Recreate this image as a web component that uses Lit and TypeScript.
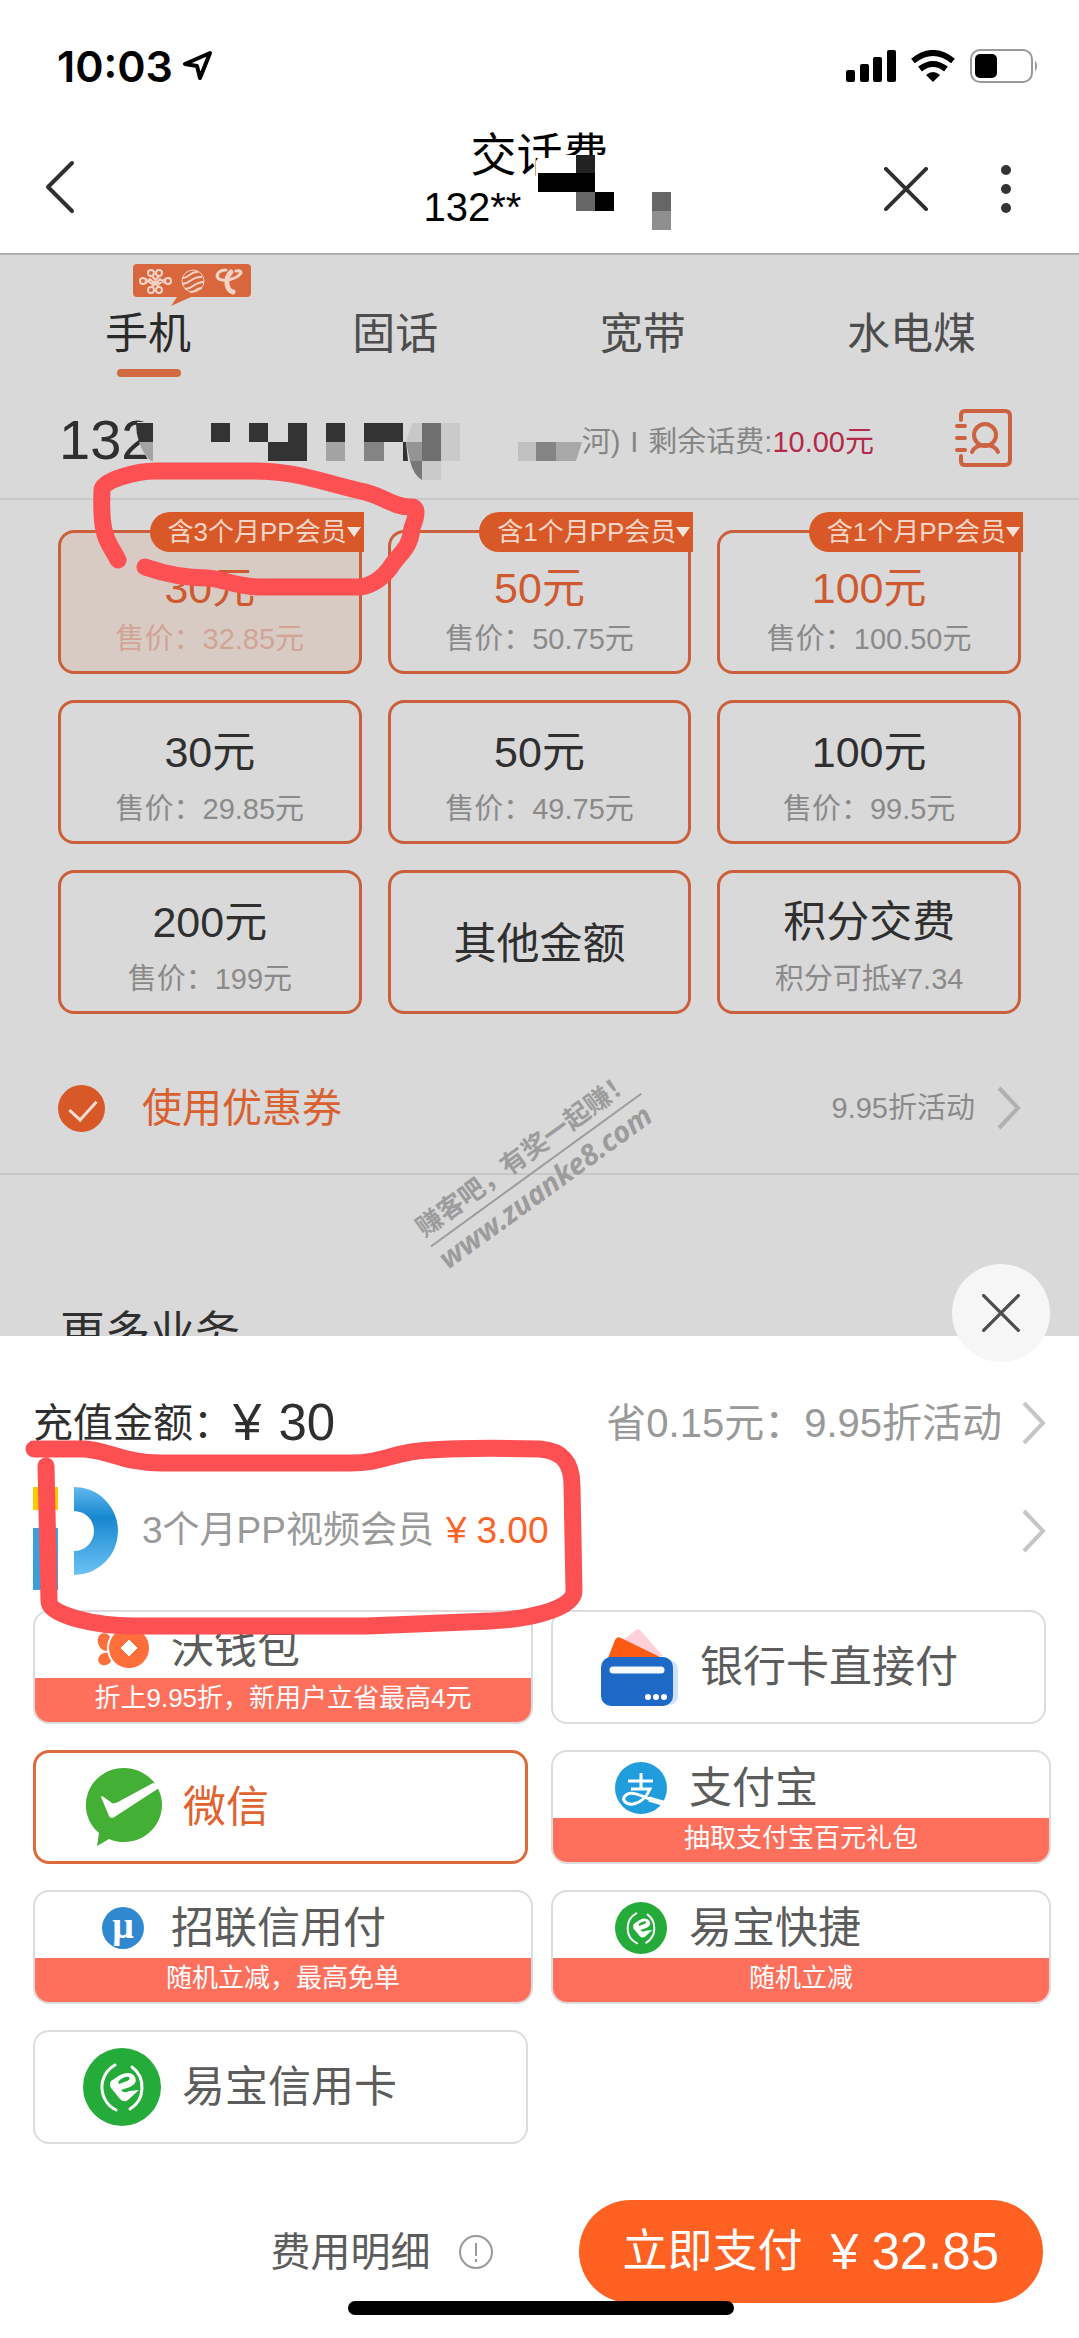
import { LitElement, html, css, svg, nothing } from "lit";
import { customElement, state } from "lit/decorators.js";
import { classMap } from "lit/directives/class-map.js";

type Plan = { amount: string; note?: string; bundle?: string };
type Method = { name: string; icon: string; promo?: string };

const TABS = ["手机", "固话", "宽带", "水电煤"];

const PLANS: Plan[] = [
  { amount: "30元", note: "售价：32.85元", bundle: "含3个月PP会员" },
  { amount: "50元", note: "售价：50.75元", bundle: "含1个月PP会员" },
  { amount: "100元", note: "售价：100.50元", bundle: "含1个月PP会员" },
  { amount: "30元", note: "售价：29.85元" },
  { amount: "50元", note: "售价：49.75元" },
  { amount: "100元", note: "售价：99.5元" },
  { amount: "200元", note: "售价：199元" },
  { amount: "其他金额" },
  { amount: "积分交费", note: "积分可抵¥7.34" },
];

const METHODS: Method[] = [
  { name: "沃钱包", icon: "wo", promo: "折上9.95折，新用户立省最高4元" },
  { name: "银行卡直接付", icon: "bank" },
  { name: "微信", icon: "wechat" },
  { name: "支付宝", icon: "alipay", promo: "抽取支付宝百元礼包" },
  { name: "招联信用付", icon: "mu", promo: "随机立减，最高免单" },
  { name: "易宝快捷", icon: "yee", promo: "随机立减" },
  { name: "易宝信用卡", icon: "yee" },
];

const ICONS: Record<string, unknown> = {
  wo: svg`
    <ellipse cx="8" cy="20" rx="7" ry="9" transform="rotate(-20 8 20)" fill="#ff6f3c"/>
    <ellipse cx="8" cy="37" rx="7" ry="6" transform="rotate(-30 8 37)" fill="#ff6f3c"/>
    <circle cx="32" cy="26" r="22" fill="#fff"/>
    <circle cx="32" cy="26" r="20" fill="#ff6f3c"/>
    <path d="M32 18 40 26 32 34 24 26Z" fill="#fff" stroke="#fff" stroke-width="1" stroke-linejoin="round"/>`,
  bank: svg`
    <path d="M22 12 35 2Q37 0 39 2L62 28H30Z" fill="#ffd0da"/>
    <path d="M7 30 14 12Q16 8 20 10L61 30Z" fill="#ff5a14"/>
    <rect x="8" y="32" width="69" height="45" rx="9" fill="#cfe2ff"/>
    <rect x="0" y="29" width="72" height="49" rx="10" fill="#1f69c6"/>
    <path d="M12 42H60" stroke="#f4f8ff" stroke-width="7" stroke-linecap="round"/>
    <circle cx="47" cy="69" r="3" fill="#fff"/><circle cx="55" cy="69" r="3" fill="#fff"/><circle cx="63" cy="69" r="3" fill="#fff"/>`,
  wechat: svg`
    <path d="M39 0A38 37 0 1 1 25 71L13 78 15 65A38 37 0 0 1 39 0Z" fill="#43b035"/>
    <path d="M17 29Q18 27 21 30L28 35Q30 36 34 34L69 15 78 18 32 48Q27 52 25 48Z" fill="#fff"/>`,
  alipay: svg`
    <circle cx="26" cy="26" r="26" fill="#219dde"/>
    <g fill="none" stroke="#fff" stroke-width="3">
      <path d="M13 19H38M26 11V27M16 27H35C32 34 26 41 18 42C10 43 6 37 11 33C17 28 28 35 40 39"/>
      <path d="M34 37 51 42" stroke-width="5"/>
    </g>`,
  mu: svg`
    <circle cx="26" cy="26" r="21" fill="#2f88d0"/>
    <text x="26" y="36" text-anchor="middle" class="glyph">μ</text>`,
  yee: svg`
    <circle cx="39" cy="39" r="39" fill="#25ab3a"/>
    <g fill="none" stroke="#fff" stroke-linecap="round">
      <path d="M32 17A24 25 0 0 0 33 62" stroke-width="3"/>
      <path d="M49 19A24 25 0 0 1 47 61" stroke-width="3"/>
    </g>
    <path fill-rule="evenodd" fill="#fff" d="M56 42 45 52Q41 55 37 51L28 40Q26 36 28 33L37 27Q48 22 52 29Q55 35 47 39L38 42Q41 46 46 43ZM36 36 44 33Q48 31 46 29Q43 28 38 31Q34 34 36 36Z"/>`,
};

const chevron = html`<svg class="chevron" viewBox="0 0 24 44" aria-hidden="true"><path d="M2 2 21 22 2 42" fill="none" stroke="currentColor" stroke-width="4"/></svg>`;

@customElement("status-bar")
export class StatusBar extends LitElement {
  static styles = css`
    :host { display: flex; align-items: center; height: 129px; padding: 2px 40px 0 57px; box-sizing: border-box; }
    .time { font: 600 43px/50px Inter, "Liberation Sans", sans-serif; color: #000; }
    .loc { width: 31px; height: 30px; margin-left: 9px; }
    .icons { display: flex; align-items: center; gap: 15px; margin-left: auto; }
    .cell { width: 50px; height: 32px; }
    .wifi { width: 44px; height: 32px; }
    .battery { width: 69px; height: 34px; }
  `;
  render() {
    return html`
      <span class="time">10:03</span>
      <svg class="loc" viewBox="0 0 31 30" aria-hidden="true"><path d="M28 2 3 13 15 15 18 27Z" fill="none" stroke="#000" stroke-width="4" stroke-linejoin="round"/></svg>
      <span class="icons">
        <svg class="cell" viewBox="0 0 50 32" aria-hidden="true"><rect x="0" y="20" width="9" height="12" rx="2"/><rect x="14" y="14" width="9" height="18" rx="2"/><rect x="27" y="7" width="9" height="25" rx="2"/><rect x="41" y="0" width="9" height="32" rx="2"/></svg>
        <svg class="wifi" viewBox="0 0 44 32" aria-hidden="true"><g fill="none" stroke="#000" stroke-width="6"><path d="M2 11Q22-5 42 11"/><path d="M9 19Q22 9 35 19"/></g><path d="M22 32 15 25Q22 19 29 25Z"/></svg>
        <svg class="battery" viewBox="0 0 69 34" aria-hidden="true"><rect x="1" y="1" width="61" height="32" rx="9" fill="none" stroke="#999" stroke-width="2"/><rect x="5" y="5" width="22" height="24" rx="5"/><path d="M65 11Q69 17 65 23Z" fill="#999"/></svg>
      </span>`;
  }
}

@customElement("pay-method")
export class PayMethod extends LitElement {
  static properties = { method: { attribute: false }, selected: { type: Boolean } };
  declare method: Method;
  declare selected: boolean;
  static styles = css`
    :host { display: block; }
    .card {
      display: flex; flex-direction: column; box-sizing: border-box; width: calc(100% - 5px); height: 114px; padding: 0;
      border: 2px solid #dcdcdc; border-radius: 16px; background: #fff; overflow: hidden; color: #5c5c5c;
      font: 43px/60px "Liberation Sans", "Noto Sans CJK SC", sans-serif; text-align: left;
    }
    .selected { border-color: #dd6a3a; border-width: 3px; color: #e0622f; }
    .promo-card { width: 100%; }
    .main { display: flex; align-items: center; flex: 1; gap: 21px; padding-left: 48px; }
    .promo-card .main { gap: 22px; padding: 6px 0 0 62px; }
    .icon { width: 78px; height: 78px; }
    .promo-card .icon { width: 52px; height: 52px; }
    .promo { height: 44px; background: #ff705c; color: #fff; font-size: 26px; line-height: 41px; text-align: center; }
    .glyph { font: bold 38px "Liberation Serif", serif; fill: #fff; }
  `;
  render() {
    const m = this.method;
    const small = m.icon === "wo" || m.icon === "mu" || m.icon === "alipay";
    return html`<button class=${classMap({ card: true, selected: this.selected, "promo-card": !!m.promo })} aria-pressed=${this.selected ? "true" : "false"}>
      <span class="main">
        <svg class="icon" viewBox=${small ? "0 0 52 52" : "0 0 78 78"} aria-hidden="true">${ICONS[m.icon]}</svg>
        <span>${m.name}</span>
      </span>
      ${m.promo ? html`<span class="promo">${m.promo}</span>` : nothing}
    </button>`;
  }
}

@customElement("app-root")
export class AppRoot extends LitElement {
  @state() private plan = 0;
  @state() private pay = 2;

  static styles = css`
    :host { display: block; background: #fff; color: #2f2f2f; font-family: "Liberation Sans", "Noto Sans CJK SC", sans-serif; }
    * { box-sizing: border-box; }
    button { margin: 0; padding: 0; border: 0; background: none; color: inherit; font: inherit; }
    h1, h2, p { margin: 0; font-weight: 400; }
    .page { position: relative; overflow: hidden; }

    .nav { display: grid; grid-template-columns: 1fr 232px 1fr; height: 126px; padding: 0 44px; border-bottom: 2px solid #b0b0b0; color: #2f2f2f; }
    .side { display: flex; align-items: center; }
    .right { justify-content: flex-end; gap: 69px; padding-right: 20px; }
    .back { width: 32px; height: 54px; margin-bottom: 4px; }
    .cross { width: 44px; height: 44px; }
    .more { width: 18px; height: 50px; }
    .titles { position: relative; color: #000; }
    .title { font-size: 46px; line-height: 52px; text-align: center; }
    .account { font-size: 40px; line-height: 52px; }
    .title-mask { position: absolute; left: 112px; top: 26px; width: 140px; height: 80px; }

    .body { background: #d9d9d9; }
    .tabs { display: flex; justify-content: space-between; padding: 49px 103px 0 105px; }
    .tab { position: relative; color: #4d4d4d; font-size: 43px; line-height: 60px; padding-bottom: 13px; }
    .tab.active { color: #2a2a2a; }
    .tab.active::after { content: ""; position: absolute; left: 12px; right: 10px; bottom: 0; height: 8px; border-radius: 4px; background: #d16a40; }
    .carriers { position: absolute; left: 28px; top: -40px; width: 118px; height: 43px; }

    .number { position: relative; display: flex; align-items: center; height: 123px; padding: 4px 66px 0 59px; border-bottom: 2px solid #c6c9c9; }
    .phone { width: 320px; padding: 0; border: 0; outline: 0; background: none; color: #2f2f2f; font: 56px/64px "Liberation Sans", sans-serif; }
    .mosaic { position: absolute; left: 134px; top: 45px; width: 450px; height: 60px; }
    .balance { display: flex; gap: 10px; margin-left: auto; margin-right: 81px; padding-top: 4px; color: #858585; font-size: 29px; line-height: 40px; }
    .money { color: #b52a4a; }
    .contacts { width: 58px; height: 60px; }

    .plans { position: relative; display: grid; grid-template-columns: repeat(3, 1fr); gap: 26px; padding: 30px 58px 0; }
    .plan {
      position: relative; display: flex; flex-direction: column; align-items: center; gap: 17px; height: 144px; padding-top: 27px;
      border: 3px solid #cb5f3b; border-radius: 16px; font-size: 43px; line-height: 44px;
    }
    .note { color: #8a8a8a; font-size: 29px; line-height: 36px; white-space: nowrap; }
    .plan.bundle { gap: 11px; padding-top: 33px; color: #cf5a31; }
    .plan.single { justify-content: center; padding-top: 4px; }
    .plan.chosen { background: #d8cbc4; }
    .chosen .note { color: #d1a496; }
    .tag {
      position: absolute; top: -21px; right: -5px; display: flex; align-items: center; height: 40px; padding: 0 3px 0 18px;
      border-radius: 20px 0 0 20px; background: #d95827; color: #f3d6c8; font-size: 26px; line-height: 40px; white-space: nowrap;
    }
    .caret { border: 7px solid transparent; border-top: 10px solid #f3e4dc; border-bottom: 0; }
    .scribble { position: absolute; left: 0; top: 0; pointer-events: none; fill: none; stroke: #fd5052; stroke-width: 17px; stroke-linecap: round; stroke-linejoin: round; overflow: visible; width: 600px; height: 200px; }

    .coupon { position: relative; display: flex; align-items: center; height: 161px; padding: 29px 58px 0; border-bottom: 2px solid #c8c8c8; }
    .use { display: flex; align-items: center; gap: 37px; color: #d9602f; font-size: 40px; line-height: 60px; }
    .tick { position: relative; appearance: none; width: 47px; height: 47px; margin: 0; border-radius: 50%; background: #d95827; }
    .tick:checked::after { content: ""; position: absolute; left: 17px; top: 9px; width: 13px; height: 23px; border: solid #f0ded5; border-width: 0 3px 3px 0; transform: rotate(42deg); }
    .offer { display: flex; align-items: center; gap: 22px; margin-left: auto; color: #8a8a8a; font-size: 29px; line-height: 40px; }
    .chevron { width: 24px; height: 44px; color: #b0b0b0; }
    .watermark { position: absolute; left: 408px; top: 201px; transform: rotate(-36deg); transform-origin: 0 0; color: #9c9c9c; white-space: nowrap; font-weight: 700; }
    .slogan { border-bottom: 2px solid #9c9c9c; font-size: 26px; line-height: 38px; }
    .site { font: italic 700 29px/34px "Noto Sans", "Liberation Sans", sans-serif; }
    .heading { padding: 129px 60px 0; font-size: 45px; line-height: 60px; }

    .sheet { position: relative; margin-top: -28px; padding: 36px 28px 35px 33px; background: #fff; }
    .close { position: absolute; top: -72px; right: 29px; display: grid; place-items: center; width: 98px; height: 98px; border-radius: 50%; background: #f6f6f6; color: #4d4d4d; }
    .close-x { width: 38px; height: 38px; }
    .line { position: relative; display: flex; align-items: center; width: 100%; height: 100px; padding: 2px 5px 0 0; font-size: 40px; line-height: 60px; text-align: left; }
    .line .chevron { margin-left: 20px; color: #c6c6c6; }
    .total { display: flex; align-items: center; gap: 17px; }
    .big { font-size: 51px; }
    .saving { margin-left: auto; color: #999; }
    .item { height: 116px; color: #999; font-size: 37px; }
    .item .chevron { margin-left: auto; }
    .pp { width: 88px; height: 106px; margin: 14px 21px 0 0; }
    .price { display: flex; gap: 10px; margin-left: 12px; color: #fa6428; }
    .methods { display: grid; grid-template-columns: 1fr 1fr; gap: 26px 18px; padding-top: 22px; }
    .footer { display: flex; align-items: center; justify-content: flex-end; gap: 86px; padding: 56px 8px 0 0; }
    .detail { display: flex; align-items: center; gap: 28px; color: #5c5c5c; font-size: 40px; line-height: 60px; }
    .info { width: 34px; height: 34px; }
    .submit { display: flex; align-items: center; height: 103px; padding: 0 44px; border-radius: 52px; background: #ff6123; color: #fff; font-size: 45px; line-height: 60px; }
    .yen { margin: 0 13px 0 28px; font-size: 50px; }
    .home { position: absolute; left: 50%; bottom: 23px; width: 386px; height: 14px; margin-left: -192px; border-radius: 7px; background: #000; }
  `;

  private cross(cls: string, width: number) {
    return html`<svg class=${cls} viewBox="0 0 46 46" aria-hidden="true"><path d="M2 2 44 44M44 2 2 44" stroke="currentColor" stroke-width=${width} stroke-linecap="round"/></svg>`;
  }

  private carriers() {
    return html`<svg class="carriers" viewBox="0 0 118 43" aria-hidden="true">
      <path d="M4 0H114Q118 0 118 4V29Q118 33 114 33H58L38 42 44 33H4Q0 33 0 29V4Q0 0 4 0Z" fill="#d9673d"/>
      <g fill="none" stroke="#f2d3c5" stroke-width="2">
        <circle cx="18" cy="9" r="3"/><circle cx="26" cy="9" r="3"/><circle cx="10" cy="17" r="3"/><circle cx="35" cy="17" r="3"/><circle cx="18" cy="26" r="3"/><circle cx="26" cy="26" r="3"/>
        <path d="M13 15 19 20 26 12M19 12 26 20 32 15M13 19 17 15 26 23M32 19 27 15 19 23"/>
        <circle cx="60" cy="17" r="11" stroke-width="1"/>
        <path d="M50 14C56 14 57 7 65 8M49 20C58 20 58 12 69 13M52 25C61 25 60 18 71 18M57 28C63 28 63 24 69 24"/>
      </g>
      <g fill="none" stroke="#f2d3c5" stroke-linecap="round">
        <path d="M93 6C85 6 82 12 86 15C91 18 104 15 108 9Q108 6 103 7" stroke-width="3"/>
        <path d="M98 8Q93 13 94 20Q95 27 100 28" stroke-width="5"/>
      </g>
    </svg>`;
  }

  render() {
    return html`<div class="page">
      <status-bar></status-bar>
      <header class="nav">
        <div class="side"><button aria-label="返回"><svg class="back" viewBox="0 0 32 54" aria-hidden="true"><path d="M28 3 4 27 28 51" fill="none" stroke="currentColor" stroke-width="4" stroke-linecap="round" stroke-linejoin="round"/></svg></button></div>
        <div class="titles">
          <h1 class="title">交话费</h1>
          <p class="account">132**</p>
          <svg class="title-mask" viewBox="0 0 140 80" aria-hidden="true">
            <path d="M2 3H26V30H-8V18Z" fill="#fff"/><path d="M24 0H75V30H24ZM-17 20H20V36H-17Z" fill="#fff"/><path d="M-17 37H3V70H-17Z" fill="#fff" opacity="0"/>
            <path d="M40 0H59V18H40Z" fill="#222"/><path d="M2 18H59V37H2Z"/><path d="M40 37H59V56H40Z" fill="#666"/><path d="M59 37H78V56H59Z"/>
            <path d="M116 37H135V56H116Z" fill="#666"/><path d="M116 56H135V75H116Z" fill="#8f8f8f"/>
          </svg>
        </div>
        <div class="side right">
          <button aria-label="关闭">${this.cross("cross", 4)}</button>
          <button aria-label="更多"><svg class="more" viewBox="0 0 18 50" aria-hidden="true"><g fill="#333"><circle cx="9" cy="6" r="5"/><circle cx="9" cy="25" r="5"/><circle cx="9" cy="44" r="5"/></g></svg></button>
        </div>
      </header>

      <main class="body">
        <nav class="tabs">
          ${TABS.map((t, i) => html`<button class=${classMap({ tab: true, active: i === 0 })}>${t}${i === 0 ? this.carriers() : nothing}</button>`)}
        </nav>
        <div class="number">
          <input class="phone" type="tel" value="132" aria-label="手机号码" />
          <div class="balance"><span>河)</span><span>I</span><span>剩余话费:<span class="money">10.00元</span></span></div>
          <button aria-label="通讯录"><svg class="contacts" viewBox="0 0 58 60" aria-hidden="true"><g fill="none" stroke="#cc6240" stroke-width="4" stroke-linecap="round"><path d="M6 12V7Q6 3 10 3H50Q55 3 55 8V52Q55 57 50 57H10Q6 57 6 53V48"/><path d="M2 18H10M2 30H10M2 42H10"/><circle cx="30" cy="27" r="11"/><path d="M17 44Q20 37 30 37T43 44"/></g></svg></button>
          <svg class="mosaic" viewBox="0 0 450 60" aria-hidden="true">
            <path d="M3 0H40V41H16Q2 20 3 0Z" fill="#d9d9d9"/>
            <path d="M2 1H19V20H5Q2 11 2 1Z" fill="#333"/><path d="M5 20H19V39H17Q9 32 5 20Z" fill="#a3a3a3"/>
            <g fill="#333"><path d="M77 1H96V20H77ZM115 1H134V20H115ZM154 1H173V39H134V20H154ZM192 1H211V20H192ZM230 1H269V20H230ZM269 20H272L274 39H269Z"/></g>
            <path d="M192 20H211V39H192Z" fill="#a3a3a3"/><path d="M230 20H250V39H230Z" fill="#848484"/>
            <path d="M278 1H288V20H272Z" fill="#c8c8c8"/><path d="M272 20H288V39H276Z" fill="#949494"/><path d="M276 39H288V58Q280 54 276 39Z" fill="#777"/>
            <path d="M288 1H307V39H288Z" fill="#6f6f6f"/><path d="M307 1H326V39H307ZM288 39H307V58H288Z" fill="#cacaca"/>
            <path d="M384 20H402V39H384Z" fill="#c0c0c0"/><path d="M402 20H422V39H402Z" fill="#848484"/><path d="M422 20H448L442 39H422Z" fill="#a8a8a8"/>
          </svg>
        </div>

        <section class="plans">
          ${PLANS.map((p, i) => html`<button class=${classMap({ plan: true, bundle: !!p.bundle, single: !p.note, chosen: i === this.plan })} @click=${() => (this.plan = i)}>
            ${p.bundle ? html`<span class="tag">${p.bundle}<i class="caret"></i></span>` : nothing}
            <span>${p.amount}</span>
            ${p.note ? html`<span class="note">${p.note}</span>` : nothing}
          </button>`)}
          <svg class="scribble" viewBox="0 0 600 200" aria-hidden="true"><path d="M118 60C112 48 106 42 104 30Q101 18 102-10C102-20 138-29 155-29H250C300-29 320-18 365-8C385-3 395 8 412 7Q420 8 412 28C410 50 398 54 390 68Q378 84 361 87H262C235 87 225 79 207 78C185 78 165 74 145 67"/></svg>
        </section>

        <div class="coupon">
          <label class="use"><input class="tick" type="checkbox" checked />使用优惠券</label>
          <button class="offer">9.95折活动${chevron}</button>
          <div class="watermark"><div class="slogan">赚客吧，有奖一起赚！</div><div class="site">www.zuanke8.com</div></div>
        </div>
        <h2 class="heading">更多业务</h2>
      </main>

      <section class="sheet">
        <button class="close" aria-label="关闭">${this.cross("close-x", 4)}</button>
        <div class="line">
          <span>充值金额：</span><span class="total big"><span>¥</span><span>30</span></span>
          <button class="saving">省0.15元：9.95折活动</button>${chevron}
        </div>
        <button class="line item">
          <svg class="pp" viewBox="0 0 88 106" aria-hidden="true">
            <defs><linearGradient id="ring" x1="0" y1="0" x2="0" y2="1"><stop offset="0" stop-color="#5fb8ee"/><stop offset=".35" stop-color="#1787cf"/><stop offset="1" stop-color="#6cc3f5"/></linearGradient></defs>
            <rect y="2" width="25" height="23" fill="#ffc800"/><rect y="43" width="25" height="62" fill="#3d9fd8"/>
            <path d="M41 2A44 44 0 0 1 41 90V66A20 20 0 0 0 41 26Z" fill="url(#ring)"/>
          </svg>
          <span>3个月PP视频会员</span><span class="price"><span>¥</span><span>3.00</span></span>${chevron}
        </button>
        <div class="methods">
          ${METHODS.map((m, i) => html`<pay-method .method=${m} ?selected=${i === this.pay} @click=${() => (this.pay = i)}></pay-method>`)}
        </div>
        <svg class="scribble" viewBox="0 0 600 200" aria-hidden="true"><path d="M34 113H85C110 115 125 127 161 127H350C385 127 395 115 430 114C460 112 500 112 540 113C565 115 572 130 572 150L574 255C574 275 520 284 490 285L367 290H134C95 290 48 279 49 265L46 130"/></svg>
        <footer class="footer">
          <button class="detail">费用明细<svg class="info" viewBox="0 0 34 34" aria-hidden="true"><circle cx="17" cy="17" r="16" fill="none" stroke="#999" stroke-width="2"/><path d="M17 8V21M17 24V27" stroke="#999" stroke-width="2"/></svg></button>
          <button class="submit"><span>立即支付</span><span class="yen">¥</span><span class="big">32.85</span></button>
        </footer>
        <div class="home"></div>
      </section>
    </div>`;
  }
}
